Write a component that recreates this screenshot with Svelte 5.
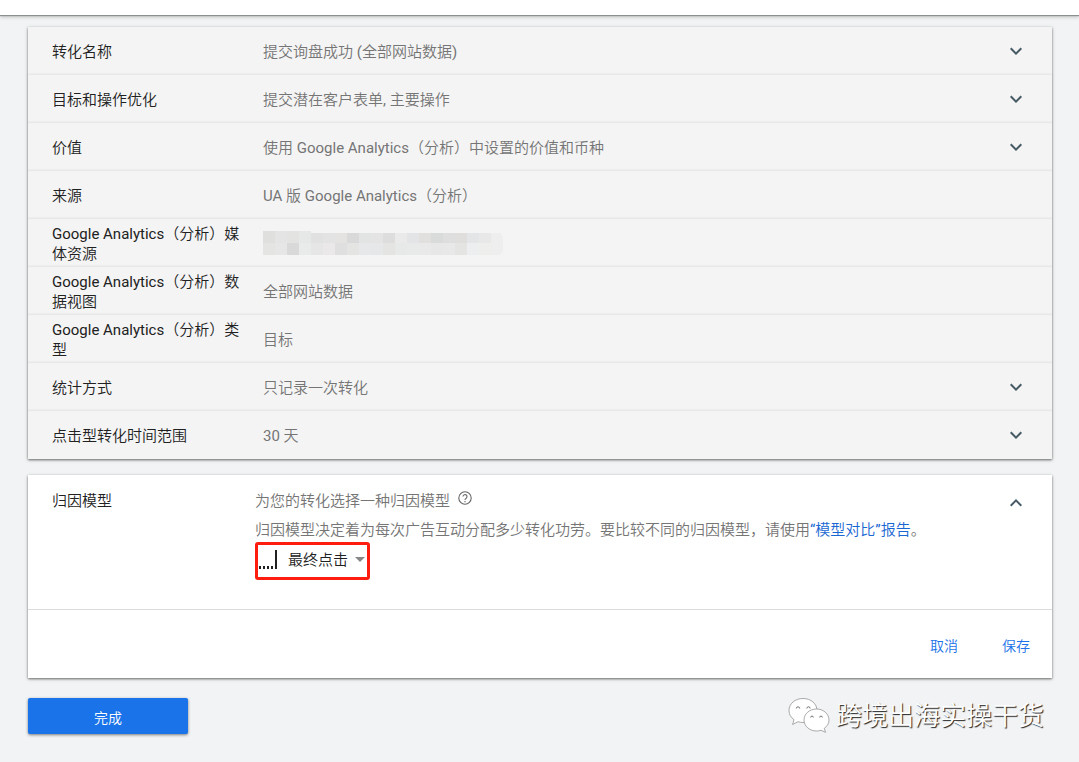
<script>
  const rows = [
    { label: '转化名称', value: '提交询盘成功 (全部网站数据)', open: true },
    { label: '目标和操作优化', value: '提交潜在客户表单, 主要操作', open: true },
    { label: '价值', value: '使用 Google Analytics（分析）中设置的价值和币种', open: true },
    { label: '来源', value: 'UA 版 Google Analytics（分析）' },
    { label: 'Google Analytics（分析）媒体资源', mosaic: true },
    { label: 'Google Analytics（分析）数据视图', value: '全部网站数据' },
    { label: 'Google Analytics（分析）类型', value: '目标' },
    { label: '统计方式', value: '只记录一次转化', open: true },
    { label: '点击型转化时间范围', value: '30 天', open: true },
  ];
  const top = ['#dfdfde', '#e4e4e4', '#e3e3e2', '#e6e8e8', '#e1e1e1', '#e3e3e3', '#e4e3e2', '#d9d9d9', '#e2e3e3', '#e5e4e4', '#dddddd', '#eaeaea', '#e2e4e5', '#e1e0df', '#d9dada', '#dedede', '#dfdedd', '#e4e5e7', '#e8e8e8', '#eeeeee'];
  const bottom = ['#e4e4e3', '#e6e6e6', '#d9d9d9', '#e9eaea', '#e6e6e6', '#eae8e9', '#dfdfdf', '#e4e4e3', '#e6e8ea', '#e6e7e8', '#e4e4e3', '#e7e8e8', '#e8e9e9', '#e9e9e9', '#e7e7e8', '#e8e8e8', '#e4e4e3', '#edeeef', '#eeeeed', '#eeeeee'];

  // Latin runs are set in regular weight, Chinese runs in the lighter base weight.
  const runs = (text) => text.split(/([ -~]+)/);
</script>

{#snippet mixed(text)}{#each runs(text) as run, i}{#if i % 2}<span class="latin">{run}</span>{:else}{run}{/if}{/each}{/snippet}

<header></header>
<main>
  <section class="card summary">
    {#each rows as row}
      <div class="row">
        <span class="label">{@render mixed(row.label)}</span>
        <span class="value">
          {#if row.mosaic}
            <svg class="mosaic" width="240" height="26" aria-hidden="true">
              {#each top as c, i}<rect x={i * 12} y={i < 4 ? 0 : 2} width="12" height={i < 4 ? 12 : 10} fill={c} />{/each}
              {#each bottom as c, i}<rect x={i * 12} y="12" width="12" height="12" fill={c} />{/each}
            </svg>
          {:else}{@render mixed(row.value)}{/if}
        </span>
        {#if row.open}
          <button class="toggle" aria-label="展开{row.label}">
            <svg width="24" height="24" viewBox="0 0 24 24"><path d="M16.6 8.6 12 13.2 7.4 8.6 6 10l6 6 6-6z" /></svg>
          </button>
        {/if}
      </div>
    {/each}
  </section>

  <section class="card editor">
    <div class="body">
      <h2 class="label">归因模型</h2>
      <div class="content">
        <div class="lead">
          <label for="model">为您的转化选择一种归因模型</label>
          <button class="help" aria-label="帮助">
            <svg width="14" height="14" viewBox="0 0 14 14" fill="none" stroke="#666" stroke-width="1.1"><circle cx="7" cy="7" r="6.2" /><path d="M5 5.600a2 2 0 1 1 3.200 1.600C7.400 7.800 7 8 7 9M7 10v1.200" /></svg>
          </button>
        </div>
        <p>归因模型决定着为每次广告互动分配多少转化功劳。要比较不同的归因模型，请使用<a href="#report"><span class="latin">“</span>模型对比<span class="latin">”</span>报告</a>。</p>
        <div class="picker">
          <svg class="bars" width="18" height="19" viewBox="0 0 18 19" aria-hidden="true"><path d="M0 16h2v3H0zM4 16h2v3H4zM8 16h2v3H8zM12 16h2v3h-2zM16 0h2v19h-2z" /></svg>
          <select id="model"><option>最终点击</option></select>
          <svg class="caret" width="10" height="5" viewBox="0 0 10 5" aria-hidden="true"><path d="M0 0h10L5 5z" /></svg>
        </div>
      </div>
      <button class="toggle" aria-label="收起归因模型">
        <svg width="24" height="24" viewBox="0 0 24 24"><path d="M12 8 6 14l1.400 1.400 4.600-4.600 4.600 4.600L18 14z" /></svg>
      </button>
    </div>
    <div class="actions">
      <button>取消</button>
      <button>保存</button>
    </div>
  </section>

  <footer>
    <button class="done">完成</button>
    <div class="brand">
      <svg width="42" height="36" viewBox="0 0 42 36" fill="#fff" stroke="#888" stroke-width="0.7">
        <path d="M15 0.500C7 0.500 1 5.800 1 12.500c0 4 2 7 5 9.200L4.600 26.500l5.400-2.800c2 .6 3.400.8 5 .8 8 0 14-5.300 14-12S23 .5 15 .5z" />
        <path d="M8.300 10.500a1.700 1.700 0 1 1 3.400 0M18.800 10.500a1.700 1.700 0 1 1 3.400 0" stroke="#444" />
        <path d="M28.500 11C21.500 11 16 16 16 22s5.500 11 12.500 11c1.600 0 3-.2 4.500-.7l4.500 2-1.200-4c3-2 4.700-5 4.700-8.300 0-6-5.500-11-12.500-11z" />
        <path d="M22.600 19.500a1.400 1.400 0 1 1 2.800 0M31.600 19.500a1.400 1.400 0 1 1 2.800 0" stroke="#444" />
      </svg>
      <span>跨境出海实操干货</span>
    </div>
  </footer>
</main>

<style>
  :global(body) {
    margin: 0;
    background: #f1f3f4;
  }
  header {
    height: 15px;
    background: #fff;
    box-shadow: 0 1px 1px #8c8f90, 0 2px 4px rgba(0, 0, 0, 0.2);
  }
  main {
    padding: 12px 27px 27px 28px;
    color: #212121;
    font: 350 15px/20px Roboto, "Noto Sans CJK SC", sans-serif;
  }
  button {
    padding: 0;
    border: 0;
    background: none;
    font: inherit;
    cursor: pointer;
  }
  svg {
    display: block;
  }
  .latin {
    font-weight: 400;
  }
  .card {
    margin-bottom: 16px;
    box-shadow: 0 1px 2px rgba(0, 0, 0, 0.45), 0 1px 4px rgba(0, 0, 0, 0.2);
  }
  .summary {
    background: #f4f4f4;
  }
  .row {
    display: flex;
    align-items: center;
    box-sizing: border-box;
    height: 48px;
    padding: 0 24px;
  }
  .row + .row {
    box-shadow: 0 -1px 2px rgba(0, 0, 0, 0.08);
  }
  .label {
    flex: none;
    width: 192px;
    margin: 0;
    font: inherit;
  }
  .value {
    flex: 1;
    margin-left: 19px;
    color: #757575;
  }
  .row .label,
  .row .value {
    padding-top: 2px;
  }
  .mosaic {
    border-radius: 0 8px 8px 0;
  }
  .toggle {
    flex: none;
    fill: #455a64;
  }
  .editor {
    margin-bottom: 20px;
    background: #fff;
  }
  .body {
    display: flex;
    align-items: flex-start;
    padding: 16px 24px 29px;
  }
  .content {
    flex: 1;
    margin-left: 11px;
    color: #757575;
  }
  .lead {
    display: flex;
    align-items: flex-start;
    gap: 8px;
    height: 20px;
  }
  p {
    margin: 9px 0 2px;
  }
  a {
    color: #1967d2;
    text-decoration: none;
  }
  .picker {
    display: flex;
    align-items: center;
    box-sizing: border-box;
    width: fit-content;
    height: 38px;
    padding: 0 2px 4px 1px;
    border: 3px solid #ff1d0f;
    border-radius: 3px;
  }
  .bars {
    fill: #212121;
  }
  select {
    appearance: none;
    width: 88px;
    margin-right: -10px;
    padding: 2px 0 0 11px;
    border: 0;
    background: none;
    color: #212121;
    font: inherit;
    line-height: 24px;
  }
  .caret {
    fill: #888;
    pointer-events: none;
  }
  .actions {
    display: flex;
    justify-content: flex-end;
    gap: 44px;
    padding: 26px 22px 22px;
    border-top: 1px solid #dcdcdc;
  }
  .actions button {
    color: #1a73e8;
    font-size: 14px;
    line-height: 20px;
  }
  footer {
    display: flex;
    align-items: flex-start;
    justify-content: space-between;
  }
  .done {
    width: 160px;
    height: 36px;
    padding-top: 4px;
    border-radius: 2px;
    background: #1a73e8;
    box-shadow: 0 1px 3px rgba(0, 0, 0, 0.5);
    color: #fff;
    font-size: 14px;
  }
  .brand {
    display: flex;
    align-items: center;
    gap: 6px;
    padding-right: 8px;
    color: #fff;
    font-size: 26px;
    line-height: 32px;
    text-shadow: 1px 1px 1px #222;
  }
</style>
